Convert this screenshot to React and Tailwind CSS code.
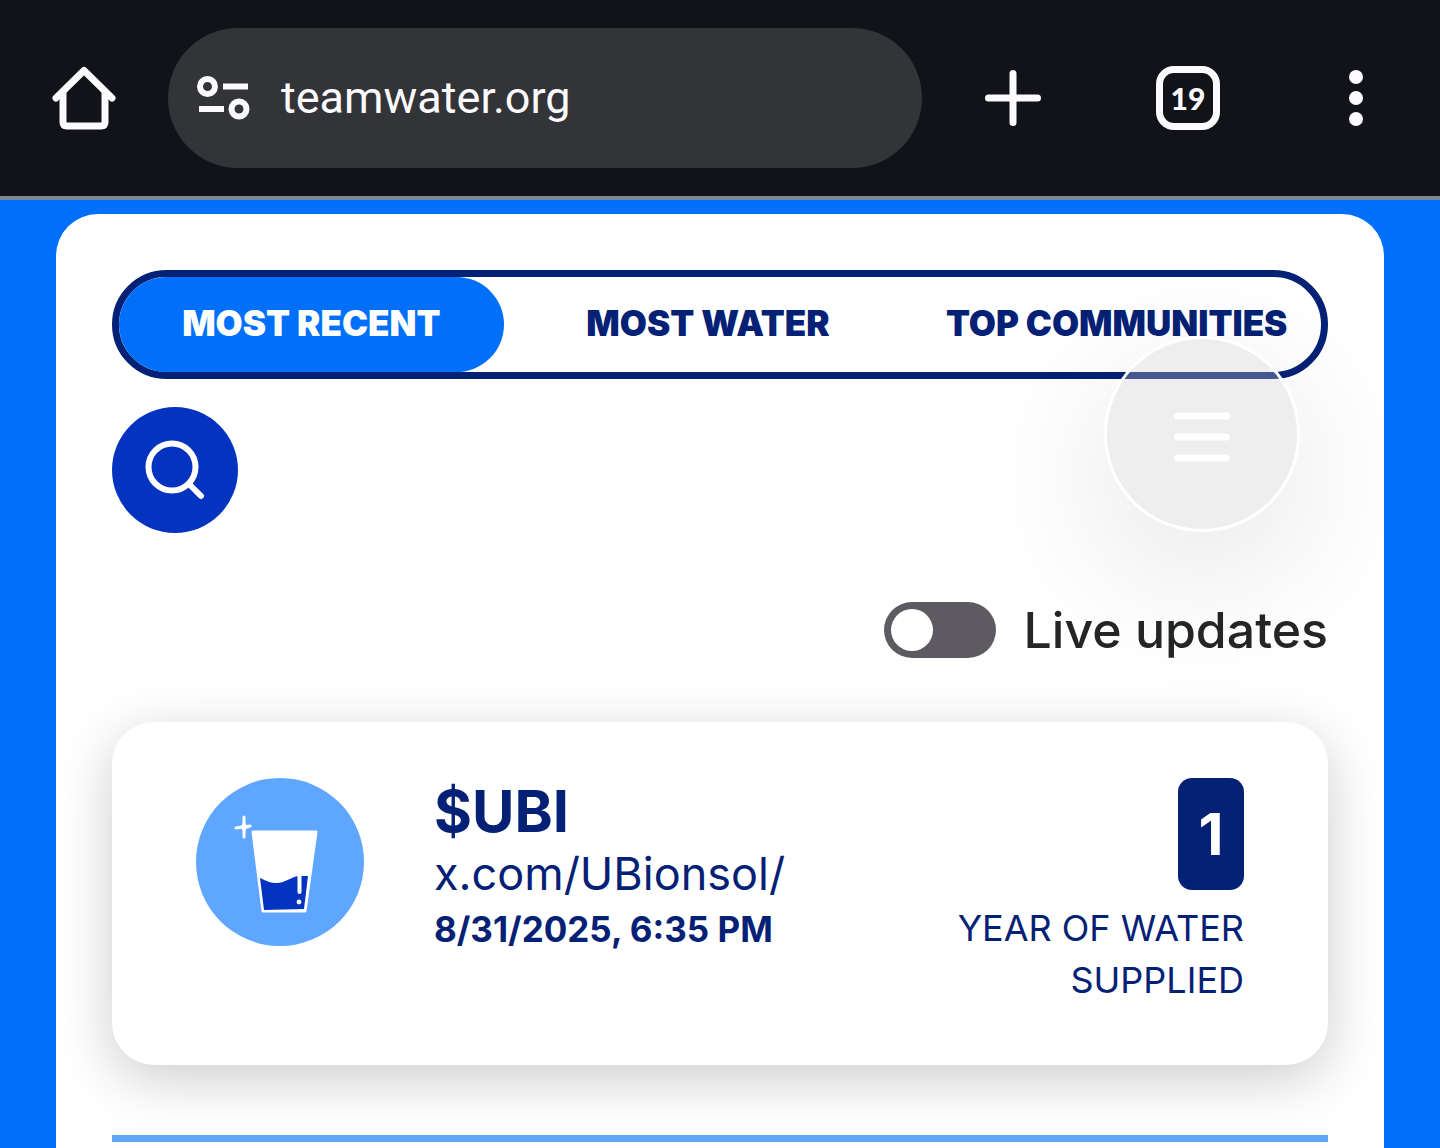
import React, { useState } from 'react';

const TABS = ['Most Recent', 'Most Water', 'Top Communities'];

const HomeIcon = () => (
  <svg className="h-16 w-16" viewBox="0 0 64 64" fill="none" stroke="currentColor" strokeWidth="7">
    <path d="M4 32 32 4.5 60 32" strokeLinecap="round" strokeLinejoin="round" />
    <path d="M11 26v30q0 4 4 4h34q4 0 4-4V26" />
  </svg>
);

const SiteSettingsIcon = () => (
  <svg className="h-11 w-[54px] shrink-0" viewBox="0 0 54 44" fill="none" stroke="currentColor" strokeWidth="6">
    <circle cx="10.5" cy="10.5" r="7.5" />
    <path d="M26 10.5h25M2 33h25" />
    <circle cx="42" cy="33" r="7.5" />
  </svg>
);

const PlusIcon = () => (
  <svg className="h-14 w-14" viewBox="0 0 56 56" stroke="currentColor" strokeWidth="7" strokeLinecap="round">
    <path d="M28 3.5v49M3.5 28h49" />
  </svg>
);

const DotsIcon = () => (
  <svg className="h-14 w-4" viewBox="0 0 16 56" fill="currentColor">
    <circle cx="8" cy="7" r="7" />
    <circle cx="8" cy="28" r="7" />
    <circle cx="8" cy="49" r="7" />
  </svg>
);

const SearchIcon = () => (
  <svg className="h-[60px] w-[60px]" viewBox="0 0 60 60" fill="none" stroke="currentColor" strokeWidth="6" strokeLinecap="round">
    <circle cx="27" cy="27" r="23.5" />
    <path d="m44 44 12 12" />
  </svg>
);

const MenuIcon = () => (
  <svg className="h-15 w-14" viewBox="0 0 56 60" stroke="currentColor" strokeWidth="7" strokeLinecap="round">
    <path d="M3.5 12h49M3.5 33h49M3.5 54h49" />
  </svg>
);

const GlassAvatar = () => (
  <svg className="h-42 w-42 shrink-0" viewBox="0 0 168 168" aria-hidden="true">
    <circle cx="84" cy="84" r="84" fill="#5fa6ff" />
    <path d="M57 54h63l-11 79H67z" fill="#fff" stroke="#fff" strokeWidth="3" strokeLinejoin="round" />
    <path d="M64 100c6 3 11 5 16 5 10 0 16-7 24-7h8l-4 33-40 1z" fill="#0433bf" />
    <path d="M103.5 97v17" stroke="#fff" strokeWidth="4" strokeLinecap="round" />
    <circle cx="103" cy="124" r="2.4" fill="#fff" />
    {/* sparkle */}
    <path d="M48 39v20M40 50l14-2" stroke="#fff" strokeWidth="3" strokeLinecap="round" />
    <path d="M48 42l2 5 5 2-5 2-2 6-2-6-5-1 5-3z" fill="#fff" />
  </svg>
);

const BrowserBar = () => (
  <header className="flex items-center border-b-4 border-[#7d8793] bg-[#111318] py-7 text-[#fdfaff]">
    <button type="button" aria-label="Home" className="flex w-42 shrink-0 justify-center">
      <HomeIcon />
    </button>
    <div className="flex h-35 min-w-0 flex-1 items-center gap-[30px] rounded-full bg-[#333438] px-[29px]">
      <SiteSettingsIcon />
      <input
        type="text"
        aria-label="Address"
        defaultValue="teamwater.org"
        className="min-w-0 flex-1 bg-transparent font-[Roboto,sans-serif] text-[45px] outline-none"
      />
    </div>
    <button type="button" aria-label="New tab" className="flex w-[182px] shrink-0 justify-center">
      <PlusIcon />
    </button>
    <button type="button" aria-label="Open tabs" className="flex w-42 shrink-0 justify-center">
      <span className="flex h-16 w-16 items-center justify-center rounded-[18px] border-7 border-current font-[Lato,sans-serif] text-[30px] font-black">
        19
      </span>
    </button>
    <button type="button" aria-label="More options" className="flex w-42 shrink-0 justify-center">
      <DotsIcon />
    </button>
  </header>
);

const DonationCard = ({ donation }) => (
  <article className="flex items-start rounded-[42px] bg-white px-21 pt-14 pb-[59px] text-[#042175] shadow-[0_14px_56px_rgba(0,0,0,0.2)]">
    <GlassAvatar />
    <div className="ml-[70px] min-w-0 flex-1">
      <h3 className="text-[58px] leading-[66px] font-bold">{donation.name}</h3>
      <p className="text-[45px] leading-[60px]">{donation.message}</p>
      <p className="text-[35px] leading-[50px] font-bold">{donation.date}</p>
    </div>
    <div className="flex w-[300px] flex-col items-end text-right">
      <span className="flex h-28 w-[66px] items-center justify-center rounded-[14px] bg-[#042175] text-[58px] leading-[66px] font-bold text-white">
        {donation.years}
      </span>
      <span className="mt-3 text-[36px] leading-[52px] uppercase">Year of water supplied</span>
    </div>
  </article>
);

const App = () => {
  const [active, setActive] = useState(TABS[0]);
  const [live, setLive] = useState(false);

  const donation = {
    name: '$UBI',
    message: 'x.com/UBionsol/',
    date: '8/31/2025, 6:35 PM',
    years: 1
  };

  return (
    <div className="flex min-h-screen flex-col bg-[#0070fa] font-[Inter,sans-serif]">
      <BrowserBar />

      <main className="relative mx-14 mt-[14px] flex-1 rounded-t-[42px] bg-white px-14 pt-14 pb-1.5">
        {/* Leaderboard tabs */}
        <div role="tablist" className="grid grid-cols-[32fr_34fr_34fr] rounded-full border-7 border-[#042175]">
          {TABS.map((tab) => (
            <button
              key={tab}
              type="button"
              role="tab"
              aria-selected={active === tab}
              onClick={() => setActive(tab)}
              className={`h-[95px] rounded-full pb-0.5 text-[35px] font-black whitespace-nowrap uppercase ${
                active === tab ? 'bg-[#0070fa] text-white' : 'text-[#042175]'
              }`}
            >
              {tab}
            </button>
          ))}
        </div>

        <button
          type="button"
          aria-label="Search"
          className="mt-7 flex h-[126px] w-[126px] items-center justify-center rounded-full bg-[#0433bf] text-white"
        >
          <SearchIcon />
        </button>

        <label className="mt-[70px] flex h-14 items-center justify-end gap-7 pb-0.5 text-[50px] leading-[56px] font-medium text-[#252627]">
          <input
            type="checkbox"
            checked={live}
            onChange={(e) => setLive(e.target.checked)}
            className="flex h-14 w-28 appearance-none items-center rounded-full bg-[#5d5b61] px-[7px] before:h-[42px] before:w-[42px] before:rounded-full before:bg-white checked:justify-end checked:bg-[#0070fa]"
          />
          Live updates
        </label>

        <div className="mt-[63px]">
          <DonationCard donation={donation} />
        </div>
        <hr className="mt-[70px] border-t-7 border-[#5fa6f5]" />

        {/* Floating menu */}
        <button
          type="button"
          aria-label="Menu"
          className="absolute top-[122px] right-21 flex h-49 w-49 items-center justify-center rounded-full border-3 border-white bg-[rgba(202,202,202,0.32)] text-white shadow-[0_42px_150px_rgba(0,0,0,0.11)]"
        >
          <MenuIcon />
        </button>
      </main>
    </div>
  );
};

export default App;
